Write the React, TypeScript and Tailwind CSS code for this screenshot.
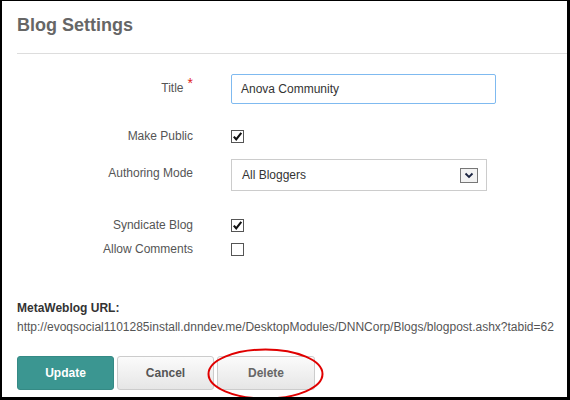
import React from 'react';

const Check = ({ checked }: { checked?: boolean }) => (
  <span className="w-[13px] h-[13px] border border-[#555] bg-white flex items-center justify-center">
    {checked && (
      <svg width="11" height="11" viewBox="0 0 11 11">
        <path d="M1.8 5.6 L4.2 8.3 L9.3 1.8" fill="none" stroke="#111" strokeWidth="2.1" />
      </svg>
    )}
  </span>
);

const Label = ({ children, className = '' }: { children: React.ReactNode; className?: string }) => (
  <div className={`w-[176px] shrink-0 text-right text-[12px] leading-[16px] text-[#555] ${className}`}>{children}</div>
);

const App = () => {
  return (
    <div
      className="relative w-[570px] h-[400px] box-border bg-white border-black border-l-2 border-t border-r-[3px] border-b-[3px] pl-[15px] overflow-hidden"
      style={{ fontFamily: '"Liberation Sans", Arial, sans-serif' }}
    >
      {/* Header */}
      <h1 className="pt-[12px] text-[18px] leading-[24px] font-bold text-[#666]">Blog Settings</h1>
      <div className="mt-[16px] h-px bg-[#dddddd]" />

      {/* Title */}
      <div className="mt-[20px] flex items-start gap-[38px]">
        <Label className="pt-[5px]">
          Title<span className="ml-[4px] relative -top-[4px] text-[14px] text-[#e02020]">*</span>
        </Label>
        <div className="w-[265px] h-[30px] border border-[#7fbaf0] rounded-[2px] flex items-center pl-[9px] text-[12px] text-[#333]">
          Anova Community
        </div>
      </div>

      {/* Make Public */}
      <div className="mt-[24px] flex items-center gap-[38px]">
        <Label>Make Public</Label>
        <Check checked />
      </div>

      {/* Authoring Mode */}
      <div className="mt-[15px] flex items-start gap-[38px]">
        <Label className="pt-[6px]">Authoring Mode</Label>
        <div className="w-[256px] h-[32px] border border-[#cccccc] flex items-center justify-between pl-[10px] pr-[8px] text-[12px] text-[#333]">
          <span>All Bloggers</span>
          <span className="w-[18px] h-[15px] border border-[#777] bg-[#f2f2f2] flex items-center justify-center">
            <svg width="10" height="7" viewBox="0 0 10 7">
              <path d="M1.5 1.5 L5 5 L8.5 1.5" fill="none" stroke="#1a2340" strokeWidth="1.8" />
            </svg>
          </span>
        </div>
      </div>

      {/* Syndicate Blog */}
      <div className="mt-[26px] flex items-center gap-[38px]">
        <Label>Syndicate Blog</Label>
        <Check checked />
      </div>

      {/* Allow Comments */}
      <div className="mt-[8px] flex items-center gap-[38px]">
        <Label>Allow Comments</Label>
        <Check />
      </div>

      {/* MetaWeblog */}
      <div className="mt-[43px] text-[12px] leading-[16px] font-bold text-[#333]">MetaWeblog URL:</div>
      <div className="mt-[3px] text-[12px] leading-[16px] text-[#555] whitespace-nowrap">
        http://evoqsocial1101285install.dnndev.me/DesktopModules/DNNCorp/Blogs/blogpost.ashx?tabid=62
      </div>

      {/* Buttons */}
      <div className="relative mt-[21px] flex gap-[3px]">
        <button className="w-[97px] h-[34px] rounded-[3px] bg-[#3b9691] border border-[#358a85] text-white text-[12px] font-bold">
          Update
        </button>
        <button className="w-[97px] h-[34px] rounded-[3px] bg-gradient-to-b from-[#fbfbfb] to-[#e6e6e6] border border-[#cccccc] text-[#555] text-[12px] font-bold">
          Cancel
        </button>
        <button className="w-[98px] h-[34px] rounded-[3px] bg-gradient-to-b from-[#fbfbfb] to-[#e6e6e6] border border-[#cccccc] text-[#666] text-[12px] font-bold">
          Delete
        </button>
        {/* red annotation ellipse */}
        <svg className="absolute left-[189px] -top-[8px] pointer-events-none" width="120" height="54" viewBox="0 0 120 54">
          <ellipse cx="59.5" cy="26" rx="57" ry="24.5" fill="none" stroke="#e00000" strokeWidth="2" />
        </svg>
      </div>
    </div>
  );
};

export default App;
